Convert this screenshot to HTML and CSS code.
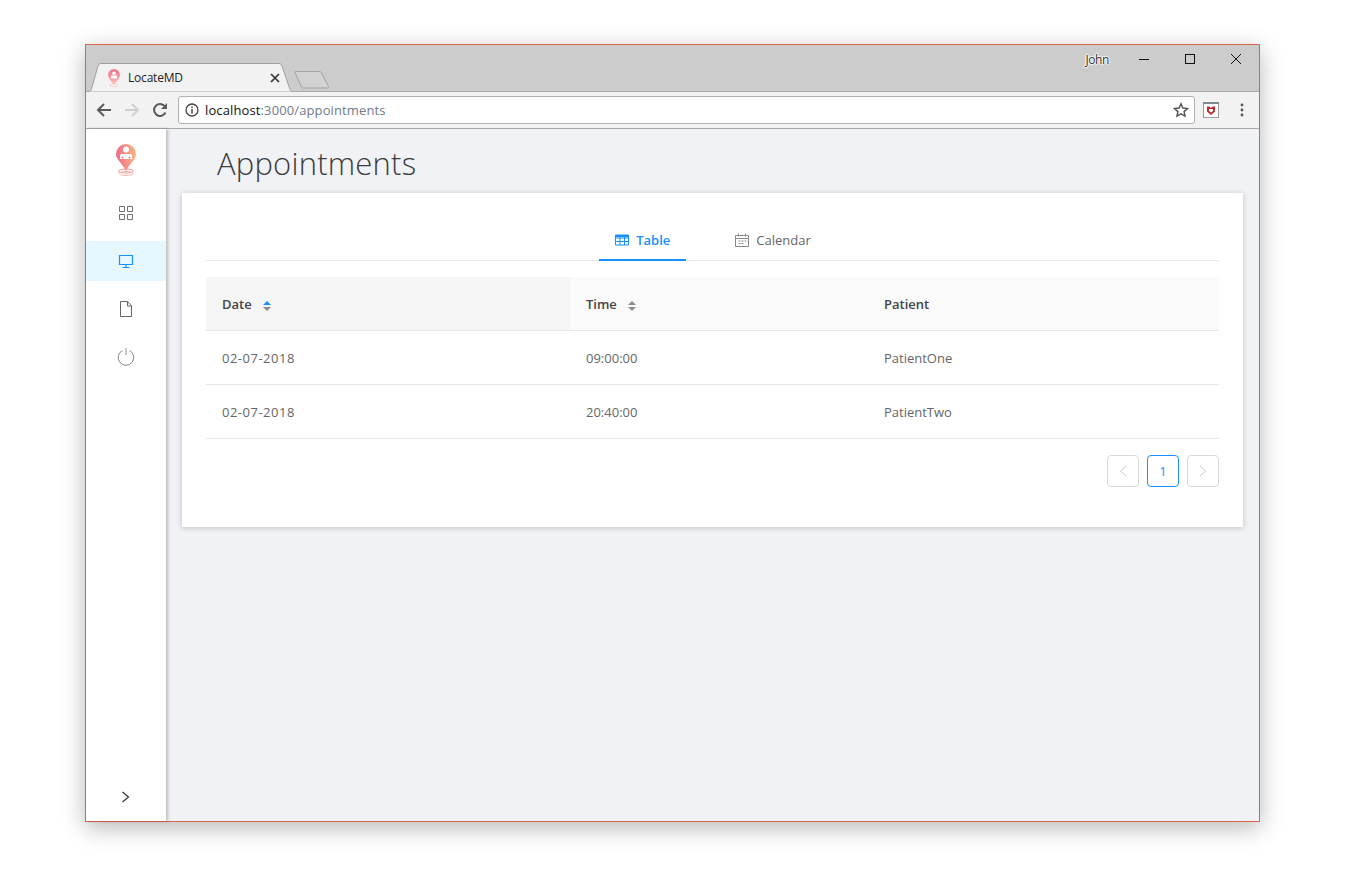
FILE: index.html
```html
<!DOCTYPE html>
<html lang="en">
<head>
<meta charset="utf-8">
<title>LocateMD</title>
<link rel="stylesheet" href="styles.css">
</head>
<body>
<svg width="0" height="0" class="defs"><defs>
  <linearGradient id="pin" x1="0" y1="0" x2="1" y2="0"><stop offset="0" stop-color="#ec6a8c"/><stop offset="1" stop-color="#fdb680"/></linearGradient>
  <linearGradient id="fav" x1="0" y1="0" x2="0" y2="1"><stop offset="0" stop-color="#f0708f"/><stop offset="1" stop-color="#fbc4b0"/></linearGradient>
</defs></svg>
<div class="window">
  <div class="titlebar">
    <div class="tabstrip">
      <div class="tab">
        <svg class="tab-shape" width="206" height="29" viewBox="0 0 206 29"><path d="M0 28.500h1.500c1.500 0 2.300-.8 2.800-2L11 3c.5-1.500 1.500-2.500 3-2.500h178c1.500 0 2.500 1 3 2.500l8 23.500c.5 1.200 1.300 2 2.500 2H206" fill="#f2f2f2" stroke="#a0a0a0"/></svg>
        <svg class="favicon" width="12" height="18" viewBox="0 0 20 30"><path d="M10 0a10 10 0 0 1 10 10c0 5-6 10-10 17C6 20 0 15 0 10A10 10 0 0 1 10 0z" fill="url(#fav)"/><circle cx="10" cy="7" r="3" fill="#fff"/><rect x="5" y="11" width="10" height="5" rx="1" fill="#fff"/><ellipse cx="10" cy="27" rx="7" ry="2.500" fill="none" stroke="#fbc4b0"/></svg>
        <span class="tab-title">LocateMD</span>
        <svg class="tab-close" width="10" height="10" viewBox="0 0 10 10"><path d="M1 1l8 8M9 1l-8 8" stroke="#333" stroke-width="1.700"/></svg>
      </div>
      <svg class="newtab" width="36" height="19" viewBox="0 0 36 19"><path d="M1.500 1.500h24c1 0 1.500.4 2 1.200l7 13.800c.3.800 0 1.500-1 1.500h-24c-1 0-1.500-.4-2-1.200L1 2.500c-.3-.5 0-1 .5-1z" fill="#d2d2d2" stroke="#a3a3a3"/></svg>
    </div>
    <div class="wincontrols">
      <span class="user">John</span>
      <svg class="winbtn" width="46" height="30" viewBox="0 0 46 30"><path d="M18 14.500h10" stroke="#111"/></svg>
      <svg class="winbtn" width="46" height="30" viewBox="0 0 46 30"><rect x="18.500" y="9.500" width="9" height="9" fill="none" stroke="#111"/></svg>
      <svg class="winbtn" width="46" height="30" viewBox="0 0 46 30"><path d="M18 9l10 10M28 9L18 19" stroke="#111" fill="none"/></svg>
    </div>
  </div>
  <div class="toolbar">
    <svg class="nav" width="16" height="16" viewBox="0 0 16 16"><path d="M15 8H2M8 2L2 8l6 6" fill="none" stroke="#5a5a5a" stroke-width="2"/></svg>
    <svg class="nav" width="16" height="16" viewBox="0 0 16 16"><path d="M1 8h13M8 2l6 6-6 6" fill="none" stroke="#cfcfcf" stroke-width="2"/></svg>
    <svg class="nav last" width="16" height="16" viewBox="0 0 16 16"><path d="M13.500 10.500A6 6 0 1 1 13 4.500" fill="none" stroke="#5a5a5a" stroke-width="2"/><path d="M15 1v6H9z" fill="#5a5a5a"/></svg>
    <div class="omnibox">
      <svg class="info" width="14" height="14" viewBox="0 0 14 14"><circle cx="7" cy="7" r="6" fill="none" stroke="#444" stroke-width="1.300"/><path d="M7 6v4.500M7 3.500v1.500" stroke="#444" stroke-width="1.500"/></svg>
      <span class="url"><span class="host">localhost</span>:3000/appointments</span>
      <svg class="star" width="16" height="16" viewBox="0 0 16 16"><path d="M8 1.800l1.900 4.200 4.600.5-3.400 3.100.9 4.500L8 11.800l-4 2.300.9-4.500L1.500 6.500 6.100 6z" fill="none" stroke="#555" stroke-width="1.500"/></svg>
    </div>
    <svg class="ext" width="16" height="16" viewBox="0 0 16 16"><rect x=".5" y=".5" width="15" height="15" fill="#fff" stroke="#999"/><rect x="0" y="0" width="16" height="2" fill="#7d8b93"/><path d="M4 4.500h2.500L8 6l1.500-1.500H12v5L8 13 4 9.500z" fill="#c0272d"/><path d="M6 7h4v2L8 10.500 6 9z" fill="#fff"/></svg>
    <svg class="menu" width="4" height="14" viewBox="0 0 4 14"><circle cx="2" cy="2" r="1.400" fill="#555"/><circle cx="2" cy="7" r="1.400" fill="#555"/><circle cx="2" cy="12" r="1.400" fill="#555"/></svg>
  </div>
  <div class="app">
    <aside class="sidebar">
      <div class="logo">
        <svg width="24" height="34" viewBox="0 0 24 34">
          <ellipse cx="12" cy="28" rx="7.500" ry="2" fill="none" stroke="#f49a93"/>
          <ellipse cx="12" cy="30.500" rx="7" ry="2" fill="none" stroke="#f9b9a5"/>
          <path d="M12 1a10 10 0 0 1 10 10c0 5.500-6 9-10 17C8 20 2 16.500 2 11A10 10 0 0 1 12 1z" fill="url(#pin)"/>
          <circle cx="12" cy="6.500" r="3" fill="#fff"/>
          <path d="M6 16v-3.500c0-1 1-1.500 2-1.500h8c1 0 2 .5 2 1.500V16z" fill="#fff"/>
          <path d="M8.500 13.500v2M7.500 14.500h2M15.500 13.500v2M14.500 14.500h2" stroke="#ec7a8c"/>
        </svg>
      </div>
      <nav class="menu-list">
        <a class="item"><svg width="16" height="16" viewBox="0 0 16 16"><path d="M1.500 1.500h5v5h-5zM9.500 1.500h5v5h-5zM1.500 9.500h5v5h-5zM9.500 9.500h5v5h-5z" fill="none" stroke="#707070"/></svg></a>
        <a class="item active"><svg width="16" height="16" viewBox="0 0 16 16"><path d="M1.500 2.500h13v9h-13z" fill="none" stroke="#1890ff" stroke-width="1.200"/><path d="M8 11.500v2.500M4.500 14.500h7" stroke="#1890ff" stroke-width="1.200"/></svg></a>
        <a class="item"><svg width="16" height="16" viewBox="0 0 16 16"><path d="M2.500.5h7l4 4.500v10.500h-11zM9.500.5V5h4" fill="none" stroke="#666"/></svg></a>
        <a class="item"><svg width="18" height="18" viewBox="0 0 18 18"><path d="M5.500 2.500a7.800 7.800 0 1 0 7 0M9 0v7" fill="none" stroke="#888" stroke-width="1"/></svg></a>
      </nav>
      <div class="collapse"><svg width="10" height="12" viewBox="0 0 10 12"><path d="M1.500 1L7.500 6l-6 5" fill="none" stroke="#333" stroke-width="1.200"/></svg></div>
    </aside>
    <main class="content">
      <h1 class="title">Appointments</h1>
      <section class="card">
        <div class="tabs">
          <div class="tabitem on">
            <svg width="14" height="12" viewBox="0 0 14 12"><path d="M.5 1h13v10H.5zM.5 4h13M.5 7.500h13M5 1v10M9.500 1v10" fill="none" stroke="#1890ff"/><path d="M.5 1h13v2H.5z" fill="#1890ff"/></svg>
            <span>Table</span>
          </div>
          <div class="tabitem cal">
            <svg width="14" height="14" viewBox="0 0 14 14"><path d="M.5 2.500h13v11H.5zM.5 5.500h13M3.500.5v3M10.500.5v3M3.500 8h2M6.500 8h2M9.500 8h2M3.500 10.500h2M6.500 10.500h2" fill="none" stroke="#888"/></svg>
            <span>Calendar</span>
          </div>
        </div>
        <table class="grid">
          <colgroup><col class="c1"><col class="c2"><col class="c3"></colgroup>
          <thead>
            <tr>
              <th class="sorted">Date <span class="sorter"><i class="up blue"></i><i class="down"></i></span></th>
              <th>Time <span class="sorter"><i class="up"></i><i class="down"></i></span></th>
              <th>Patient</th>
            </tr>
          </thead>
          <tbody>
            <tr><td class="date">02-07-2018</td><td>09:00:00</td><td>PatientOne</td></tr>
            <tr><td class="date">02-07-2018</td><td>20:40:00</td><td>PatientTwo</td></tr>
          </tbody>
        </table>
        <div class="pager">
          <span class="page off"><svg width="8" height="12" viewBox="0 0 8 12"><path d="M7 1L1.500 6 7 11" fill="none" stroke="#ccc"/></svg></span>
          <span class="page current">1</span>
          <span class="page off"><svg width="8" height="12" viewBox="0 0 8 12"><path d="M1 1l5.500 5L1 11" fill="none" stroke="#ccc"/></svg></span>
        </div>
      </section>
    </main>
  </div>
</div>
</body>
</html>
```
FILE: styles.css
```css
* { box-sizing: border-box; }
html, body { margin: 0; height: 100%; background: #fff; overflow: hidden; }
body { font-family: "Open Sans", "Noto Sans", sans-serif; color: #595959; }
.defs { display: block; height: 0; }
.window {
  width: 1175px; height: 778px; margin: 44px 0 0 85px;
  border: 1px solid #d9634f; display: flex; flex-direction: column;
  box-shadow: 0 6px 22px rgba(0,0,0,.28); background: #f0f2f5;
}
.titlebar { height: 47px; background: #cccccc; display: flex; justify-content: space-between; border-bottom: 1px solid #a9a9a9; flex: none; }
.tabstrip { display: flex; align-items: flex-end; padding-left: 1px; }
.tab { width: 206px; height: 29px; position: relative; display: flex; align-items: center; margin-bottom: -1px; padding-left: 21px; }
.tab-shape { position: absolute; left: 0; top: 0; }
.favicon, .tab-title, .tab-close { position: relative; }
.tab-title { font-size: 12px; color: #222; margin-left: 8px; width: 142px; letter-spacing: -.2px; }
.newtab { margin: 0 0 2px 1px; }
.wincontrols { display: flex; align-items: flex-start; }
.user { font-size: 12px; color: #333; margin: 6px 12px 0 0; text-shadow: 1px 0 1px #fff, -1px 0 1px #fff, 0 1px 1px #fff, 0 -1px 1px #fff; letter-spacing: -.4px; }
.winbtn { display: block; }
.toolbar { height: 37px; background: #f2f2f2; border-bottom: 1px solid #a9a9a9; display: flex; align-items: center; flex: none; padding-left: 10px; }
.nav { margin-right: 12px; }
.nav.last { margin-right: 10px; }
.omnibox { width: 1017px; height: 28px; background: #fff; border: 1px solid #b0b0b0; border-radius: 3px; display: flex; align-items: center; padding: 0 5px 0 6px; }
.info { margin-right: 6px; }
.url { flex: 1; font-size: 13px; color: #6f7b88; letter-spacing: .12px; }
.host { color: #111; }
.ext { margin-left: 8px; }
.menu { margin-left: 21px; }
.app { flex: 1; display: flex; min-height: 0; }
.sidebar { width: 80px; background: #fff; box-shadow: 2px 0 3px rgba(0,0,0,.22); display: flex; flex-direction: column; flex: none; position: relative; }
.logo { height: 64px; padding-top: 14px; display: flex; justify-content: center; }
.logo svg { display: block; }
.menu-list { display: flex; flex-direction: column; gap: 8px; }
.item { height: 40px; display: flex; align-items: center; justify-content: center; }
.item.active { background: #e6f7ff; }
.collapse { margin-top: auto; height: 48px; display: flex; align-items: center; justify-content: center; }
.content { flex: 1; padding: 0 16px; min-width: 0; }
.title { margin: 0; height: 64px; padding: 13px 0 0 35px; font-size: 31px; line-height: 42px; font-weight: 300; color: #3d3d3d; letter-spacing: .2px; }
.card { height: 334px; background: #fff; box-shadow: 0 1px 6px rgba(0,0,0,.2); padding: 24px; }
.tabs { height: 44px; border-bottom: 1px solid #e8e8e8; display: flex; justify-content: center; gap: 32px; }
.tabitem { height: 44px; padding: 2px 16px 0; display: flex; align-items: center; gap: 8px; font-size: 13px; color: #666; }
.tabitem.cal { padding-left: 17px; padding-right: 15px; }
.tabitem.on { color: #1890ff; font-weight: 600; border-bottom: 2px solid #1890ff; padding-top: 4px; }
.tabitem svg { margin-right: -1px; }
.grid { width: 100%; margin-top: 16px; border-collapse: collapse; table-layout: fixed; font-size: 13px; }
.c1 { width: 364px; } .c2 { width: 298px; }
.grid th { height: 53px; padding: 2px 16px 0; text-align: left; background: #fafafa; border-bottom: 1px solid #e8e8e8; font-weight: 600; color: #444; }
.grid th.sorted { background: #f5f5f5; }
.grid td { height: 54px; padding: 2px 16px 0; border-bottom: 1px solid #e8e8e8; color: #666; }
.grid td.date { letter-spacing: .5px; }
.sorter { display: inline-flex; flex-direction: column; gap: 2px; margin-left: 8px; vertical-align: middle; }
.sorter i { display: block; width: 0; height: 0; border-left: 4px solid transparent; border-right: 4px solid transparent; }
.sorter .up { border-bottom: 4px solid #8c8c8c; }
.sorter .up.blue { border-bottom-color: #1890ff; }
.sorter .down { border-top: 4px solid #8c8c8c; }
.pager { display: flex; justify-content: flex-end; gap: 8px; margin-top: 16px; }
.page { width: 32px; height: 32px; border: 1px solid #d9d9d9; border-radius: 4px; display: flex; align-items: center; justify-content: center; font-size: 13px; }
.page.current { border-color: #1890ff; color: #1890ff; }
```
